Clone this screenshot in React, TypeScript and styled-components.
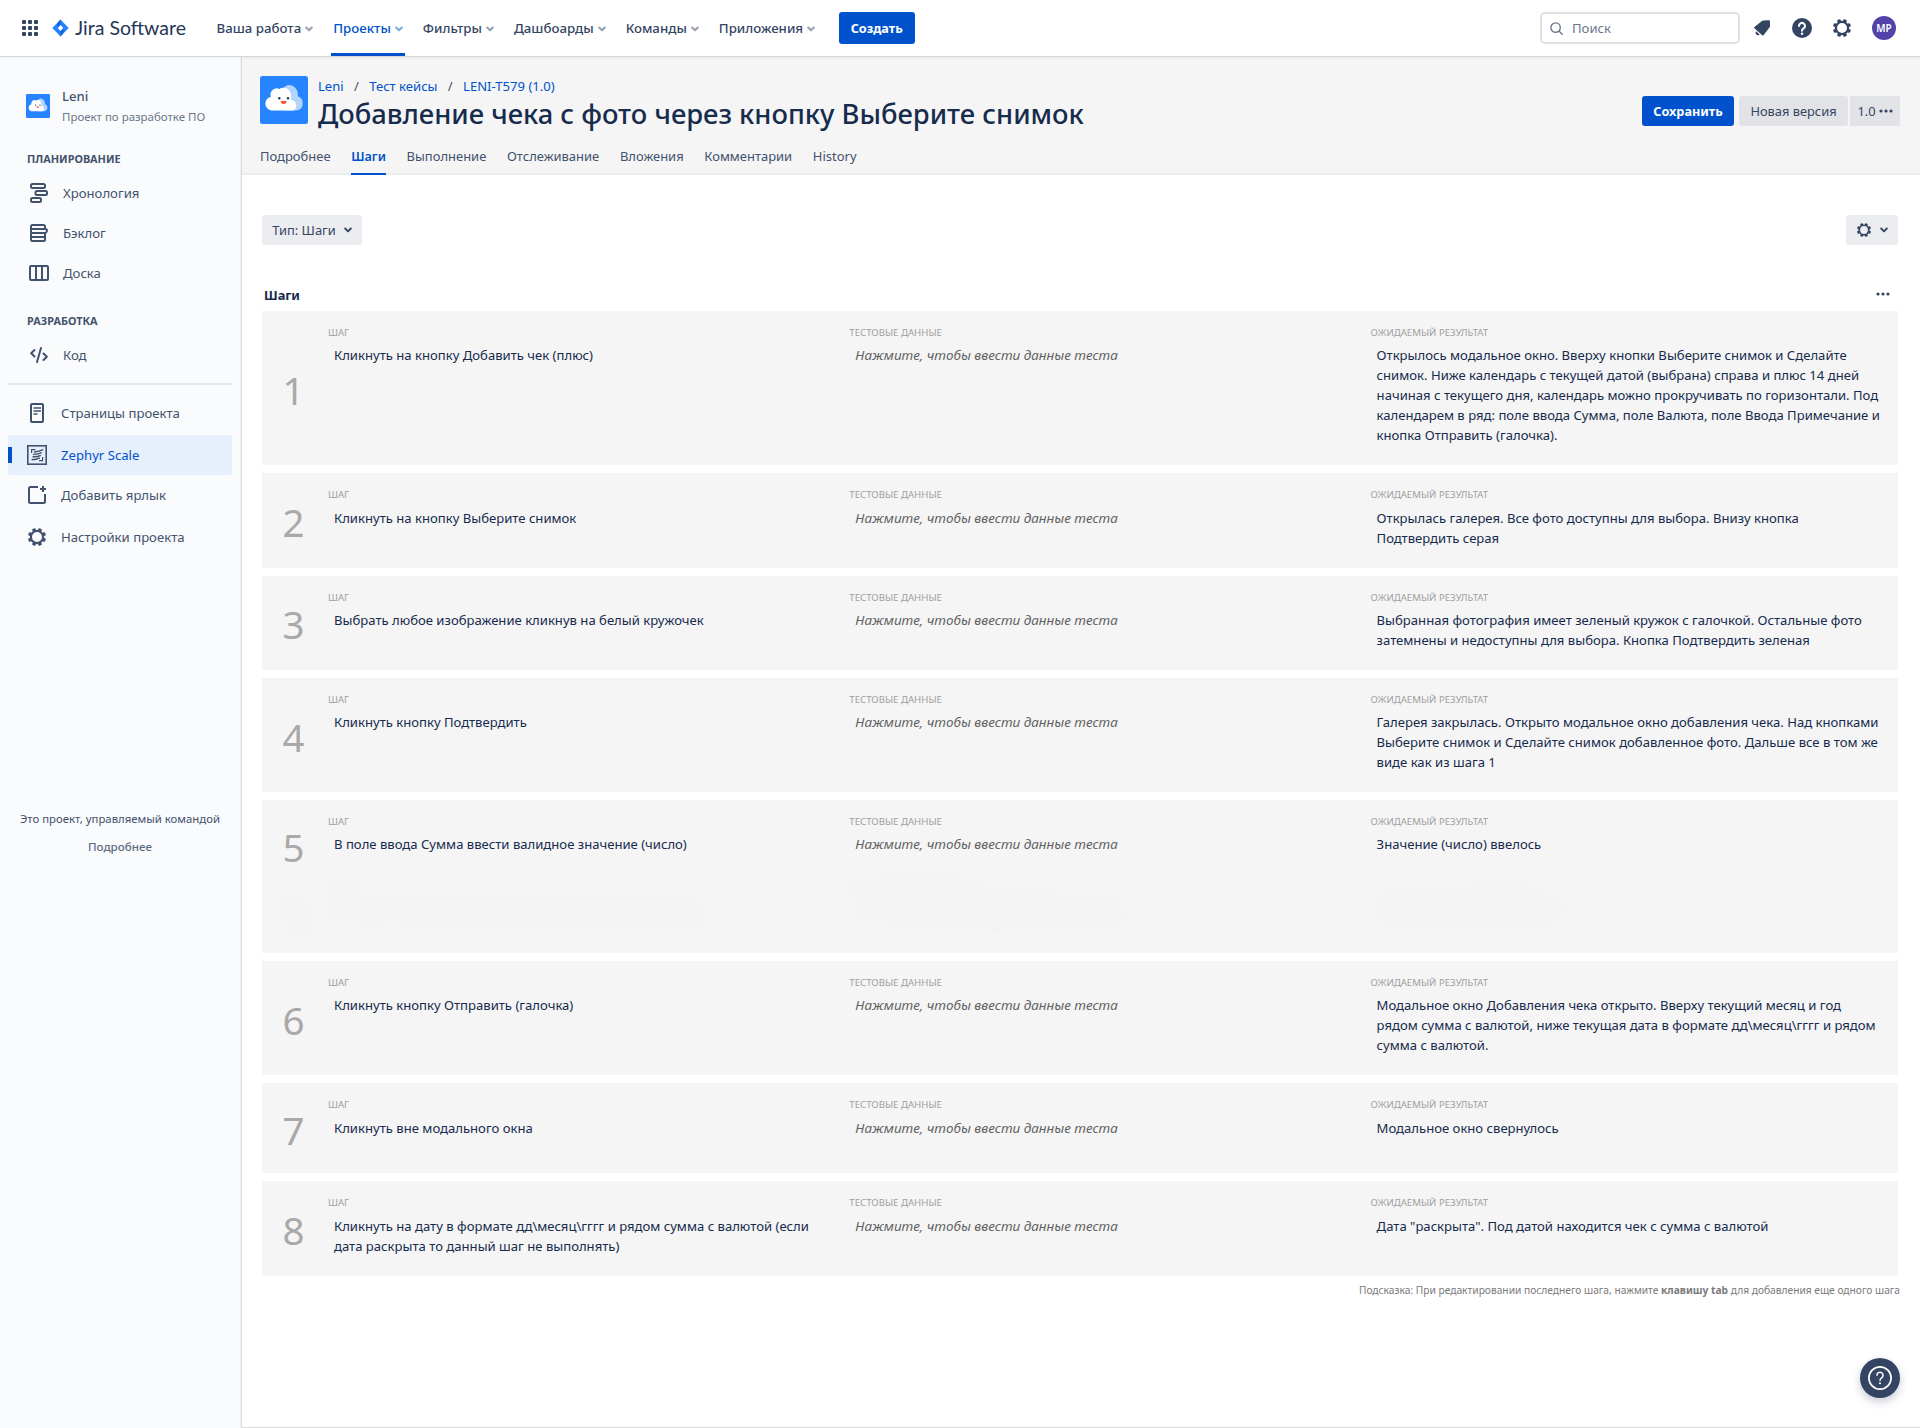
import React from "react";
import styled, { createGlobalStyle, css } from "styled-components";

const Global = createGlobalStyle`
  *, *::before, *::after { box-sizing: border-box; }
  body {
    margin: 0;
    background: #fff;
    color: #172b4d;
    font-family: "Noto Sans", "Open Sans", sans-serif;
    font-size: 13.1px;
    line-height: 20px;
  }
  svg { display: block; flex: none; }
`;

/* ---------- layout ---------- */
const Page = styled.div`
  display: grid;
  grid-template-rows: 56px 1fr;
  height: 1428px;
  overflow: hidden;
`;
const Body = styled.div`
  display: grid;
  grid-template-columns: 242px minmax(0, 1fr);
  min-height: 0;
`;

/* ---------- top bar ---------- */
const TopBar = styled.header`
  z-index: 2;
  display: flex;
  align-items: center;
  padding: 0 24px 0 22px;
  background: #fff;
  color: #344563;
  box-shadow: 0 1px 0 #d4d7de, 0 2px 2px rgba(9, 30, 66, 0.06);
`;
const Brand = styled.div`
  display: flex;
  align-items: center;
  gap: 6px;
  width: 178px;
  margin-left: 14px;
  color: #253858;
  font-family: Lato, sans-serif;
  font-size: 19.5px;
`;
const Nav = styled.nav`
  display: flex;
  gap: 15px;
  height: 56px;
  margin-left: -16px;
`;
const NavItem = styled.a<{ $active?: boolean }>`
  display: flex;
  align-items: center;
  gap: 4px;
  padding: 0 2.5px;
  font-size: 13.27px;
  font-weight: 500;
  border-bottom: 3px solid transparent;
  border-top: 3px solid transparent;
  ${(p) => p.$active && css`
    color: #0052cc;
    border-bottom-color: #0052cc;
  `}
  svg { opacity: 0.5; margin-top: 1px; }
`;
const Button = styled.button<{ $primary?: boolean; $height?: number; $width: number; $square?: boolean; $gap?: number }>`
  display: flex;
  align-items: center;
  justify-content: center;
  gap: ${(p) => p.$gap ?? 4}px;
  width: ${(p) => p.$width}px;
  height: ${(p) => p.$height ?? 30}px;
  padding: 0;
  border: 0;
  border-radius: ${(p) => (p.$square ? 0 : 3)}px;
  background: ${(p) => (p.$primary ? "#0052cc" : "rgba(9, 30, 66, 0.08)")};
  color: ${(p) => (p.$primary ? "#fff" : "#344563")};
  font-family: inherit;
  font-size: ${(p) => (p.$primary ? 12.7 : 12.85)}px;
  font-weight: ${(p) => (p.$primary ? 700 : 400)};
  white-space: nowrap;
`;
const CreateSlot = styled.div`
  margin: 0 auto 0 21px;
`;
const Search = styled.div`
  display: flex;
  align-items: center;
  gap: 9px;
  width: 200px;
  height: 32px;
  padding-left: 8px;
  border: 2px solid #dfe1e6;
  border-radius: 5px;
  color: #6b778c;
`;
const TopIcons = styled.div`
  display: grid;
  grid-template-columns: repeat(3, 40px) 44px;
  place-items: center;
  margin: 0 -10px 0 2px;
`;
const UserBadge = styled.div`
  display: grid;
  place-items: center;
  width: 24px;
  height: 24px;
  border-radius: 50%;
  background: #5243aa;
  color: #fff;
  font-size: 10px;
  font-weight: 600;
`;

/* ---------- sidebar ---------- */
const Sidebar = styled.aside`
  display: flex;
  flex-direction: column;
  padding: 28px 9px 0 8px;
  border-right: 1px solid #dcdde0;
  box-shadow: inset -1px 0 0 #eff0f2;
  background: #fafbfc;
  color: #42526e;
`;
const Project = styled.div`
  display: flex;
  align-items: center;
  gap: 12px;
  height: 44px;
  padding-left: 18px;
`;
const ProjectName = styled.div`
  font-size: 13.1px;
  font-weight: 500;
  line-height: 21px;
`;
const ProjectKind = styled.div`
  color: #6b778c;
  font-size: 11.48px;
  line-height: 20px;
`;
const Group = styled.h3<{ $top: number }>`
  height: 20px;
  margin: ${(p) => p.$top}px 0 4px 19px;
  font-size: 10.87px;
  font-weight: 700;
  line-height: 20px;
`;
const SideItem = styled.a<{ $active?: boolean; $indent?: number; $height?: number }>`
  display: grid;
  grid-template-columns: 22px auto;
  column-gap: 13px;
  align-items: center;
  justify-content: start;
  height: ${(p) => p.$height ?? 40}px;
  padding-left: ${(p) => p.$indent ?? 20}px;
  border-radius: 3px;
  font-size: 13.15px;
  ${(p) => p.$active && css`
    background: linear-gradient(#0052cc, #0052cc) 0 12px / 4px 16px no-repeat #e6effc;
    color: #0052cc;
  `}
  svg { color: #42526e; justify-self: center; }
`;
const Divider = styled.hr`
  width: 100%;
  height: 2px;
  margin: 8px 0;
  border: 0;
  background: #e7e9ec;
`;
const SideNote = styled.div`
  margin-top: 250px;
  text-align: center;
  font-size: 11.35px;
`;
const SideNoteLink = styled.div`
  margin-top: 8px;
  color: #5e6c84;
  font-size: 11.6px;
  font-weight: 500;
`;

/* ---------- main ---------- */
const Main = styled.main`
  display: flex;
  flex-direction: column;
  min-width: 0;
  border-bottom: 1px solid #dcdcdc;
`;
const Head = styled.div`
  display: flex;
  flex-direction: column;
  justify-content: space-between;
  height: 119px;
  padding: 20px 20px 0 18px;
  border-bottom: 2px solid #ebecf0;
  background: #f5f5f5;
`;
const HeadRow = styled.div`
  display: flex;
  height: 54px;
`;
const HeadText = styled.div`
  margin-left: 10px;
`;
const Crumbs = styled.div`
  display: flex;
  gap: 10.3px;
  height: 20px;
  color: #42526e;
  a { color: #0052cc; }
`;
const Title = styled.h1`
  margin: 0;
  font-size: 27.35px;
  font-weight: 500;
  line-height: 36px;
  white-space: nowrap;
`;
const Actions = styled.div`
  display: flex;
  align-items: flex-start;
  gap: 2px;
  margin-left: auto;
  padding-top: 20px;
`;
const SaveSlot = styled.div`
  margin-right: 3px;
`;
const Tabs = styled.div`
  display: flex;
  gap: 20.7px;
  margin-bottom: -2px;
  color: #42526e;
`;
const Tab = styled.a<{ $active?: boolean }>`
  height: 29px;
  font-size: 12.98px;
  line-height: 20px;
  ${(p) => p.$active && css`
    color: #0052cc;
    font-weight: 600;
    font-size: 12.6px;
    line-height: 21px;
    border-bottom: 2px solid #0052cc;
  `}
`;
const Content = styled.div`
  padding: 40px 20px 0;
`;
const Toolbar = styled.div`
  display: flex;
  justify-content: space-between;
  padding-right: 2px;
`;
const StepsHead = styled.div`
  display: flex;
  align-items: center;
  justify-content: space-between;
  height: 20px;
  margin: 40px 10px 6px 2px;
  font-size: 12.8px;
  font-weight: 700;
  svg { margin-bottom: 2px; }
`;
const StepList = styled.ol`
  display: grid;
  gap: 8px;
  margin: 0 2px 0 0;
  padding: 0;
  list-style: none;
`;
const Step = styled.li<{ $minHeight?: number }>`
  position: relative;
  display: grid;
  grid-template-columns: 66px repeat(3, 521.3px);
  grid-template-rows: minmax(90px, auto);
  align-content: start;
  min-height: ${(p) => p.$minHeight ?? 90}px;
  overflow: hidden;
  background: #f5f5f5;
`;
const StepNumber = styled.div`
  align-self: center;
  width: 63px;
  padding-top: 3.5px;
  color: #a9a9a9;
  font-size: 38.5px;
  line-height: 50px;
  text-align: center;
`;
const Field = styled.div`
  padding: 14.95px 0 12px;
`;
const FieldLabel = styled.div`
  height: 14px;
  color: #a0a0a0;
  font-size: 9.65px;
  line-height: 14px;
  text-transform: uppercase;
`;
const FieldText = styled.div<{ $hint?: boolean }>`
  padding: 5.3px 0 8.05px 6px;
  white-space: pre;
  ${(p) => p.$hint && css`
    color: #626262;
    font-size: 13.48px;
    font-style: italic;
  `}
`;
const Smudges = styled.svg`
  position: absolute;
  left: 0;
  top: 70px;
  filter: blur(2px);
`;
const Tip = styled.p`
  margin: 5px 0 0;
  color: #7a7a7a;
  font-size: 10.22px;
  line-height: 18px;
  text-align: right;
`;
const HelpButton = styled.button`
  position: fixed;
  right: 20px;
  bottom: 30px;
  display: grid;
  place-items: center;
  width: 40px;
  height: 40px;
  padding: 0;
  border: 0;
  border-radius: 50%;
  background: #344563;
  box-shadow: 0 4px 8px rgba(9, 30, 66, 0.22);
`;

/* ---------- icons ---------- */
const Chevron = ({ size = 8, stroke = 2.1 }: { size?: number; stroke?: number }) => (
  <svg width={size} height={size * 0.75} viewBox="0 0 8 6" fill="none" stroke="currentColor" strokeWidth={stroke} strokeLinecap="round" strokeLinejoin="round">
    <path d="M1.2 1.5 4 4.3 6.8 1.5" />
  </svg>
);
const Dots = () => (
  <svg width="14" height="4" viewBox="0 0 14 4" fill="#344563">
    <circle cx="2" cy="2" r="1.6" /><circle cx="7" cy="2" r="1.6" /><circle cx="12" cy="2" r="1.6" />
  </svg>
);
const AppGrid = () => (
  <svg width="16" height="16" fill="#344563">
    {[0, 6, 12].map((y) => [0, 6, 12].map((x) => <rect key={`${x}-${y}`} x={x} y={y} width="4" height="4" rx="1" />))}
  </svg>
);
const JiraMark = () => (
  <svg width="17" height="18" viewBox="0 0 17 18">
    <path d="M8.5.4 16.7 9 8.5 17.6.3 9Z" fill="#2684ff" />
    <path d="M8.5.4V6L6 8.2Q4 5 8.5.4Z" fill="#1260d8" />
    <path d="M8.5 17.6V12L11 9.8Q13 13 8.5 17.6Z" fill="#1260d8" />
    <path d="M8.5 6 11.2 9 8.5 12 5.8 9Z" fill="#fff" />
  </svg>
);
const gearTeeth = [22.5, 67.5, 112.5, 157.5, 202.5, 247.5, 292.5, 337.5];
const Gear = ({ size = 18 }: { size?: number }) => (
  <svg width={size} height={size} viewBox="-9 -9 18 18">
    <circle r="6.1" fill="none" stroke="currentColor" strokeWidth="2.2" />
    {gearTeeth.map((a) => (
      <rect key={a} x="-1.8" y="-9.1" width="3.6" height="3.2" rx="1" fill="currentColor" transform={`rotate(${a})`} />
    ))}
  </svg>
);
const SearchIcon = () => (
  <svg width="13" height="13" viewBox="0 0 13 13" fill="none" stroke="currentColor" strokeWidth="1.4" strokeLinecap="round">
    <circle cx="5.6" cy="5.6" r="4.7" /><path d="m9.2 9.2 3 3" />
  </svg>
);
const Bell = () => (
  <svg width="18" height="18" viewBox="0 0 18 18" fill="#344563">
    <path d="M15.500 1.200Q17 1.100 17 2.500v4.700q0 .9-.7 1.500L10.700 16q-.8 1-1.500.2L1.400 9.300q-.9-.8.1-1.400L8.600 2.300Q9.400 1.600 10.500 1.500Z" />
    <path d="M3.200 12.300 6.600 15.500A2.300 2.300 0 0 1 3.200 12.300Z" />
  </svg>
);
const HelpSolid = () => (
  <svg width="20" height="20" viewBox="0 0 20 20">
    <circle cx="10" cy="10" r="10" fill="#344563" />
    <path d="M7 7.900a3 3 0 1 1 4.500 2.600Q10 11.300 10 12.800" fill="none" stroke="#fff" strokeWidth="2" strokeLinecap="round" />
    <circle cx="10" cy="15.700" r="1.200" fill="#fff" />
  </svg>
);
const HelpOutline = () => (
  <svg width="24" height="24" viewBox="0 0 24 24" fill="none" stroke="#fff">
    <circle cx="12" cy="12" r="11.100" strokeWidth="1.700" />
    <path d="M9 9.300a3 3 0 1 1 4.600 2.500Q12 12.900 12 14.600" strokeWidth="1.500" strokeLinecap="round" />
    <circle cx="12" cy="17.300" r="1" fill="#fff" stroke="none" />
  </svg>
);
const Cloud = ({ size }: { size: number }) => (
  <svg width={size} height={size} viewBox="0 0 48 48">
    <rect width="48" height="48" rx="2.500" fill="#2684ff" />
    <path d="M24 34.500h12a7.300 7.300 0 0 0 1.800-14.200A8.500 10 0 0 0 23 12.500Z" fill="#b3d4ff" />
    <path d="M11.500 34.500a7 7 0 0 1-.6-13.800A6.200 6.200 0 0 1 19.500 13a7.500 7.500 0 0 1 11.300 4.500q.6 3.500.4 6.500a5.500 5.500 0 0 1 1.800 10.500Z" fill="#fff" />
    <circle cx="19.300" cy="22.300" r="1.200" fill="#253858" /><circle cx="28" cy="22.300" r="1.200" fill="#253858" />
    <path d="M20.700 25h5.800a2.900 2.900 0 0 1-5.800 0Z" fill="#ff5630" />
  </svg>
);
const strokeProps = { fill: "none", stroke: "currentColor", strokeWidth: 2, strokeLinejoin: "round" as const, strokeLinecap: "round" as const };
const Timeline = () => (
  <svg width="18" height="20" viewBox="0 0 18 20" {...strokeProps}>
    <rect x="1" y="1" width="14" height="4" rx="1.500" />
    <rect x="5.500" y="8" width="11.500" height="4" rx="1.500" />
    <rect x="1" y="15" width="10" height="4" rx="1.500" />
  </svg>
);
const Backlog = () => (
  <svg width="18" height="18" viewBox="0 0 18 18" {...strokeProps}>
    <path d="M1 5V2.500Q1 1 2.500 1h11Q15 1 15 2.500V5M1 5h14.500Q17 5 17 6.500T15.500 9M1 5v2.500Q1 9 2.500 9H15M15 9v6.500q0 1.500-1.500 1.500h-11Q1 17 1 15.500V10M1.500 13H15" />
  </svg>
);
const Board = () => (
  <svg width="20" height="16" viewBox="0 0 20 16" {...strokeProps}>
    <rect x="1" y="1" width="18" height="14" rx="1" /><path d="M7 1v14M13 1v14" />
  </svg>
);
const Code = () => (
  <svg width="18" height="16" viewBox="0 0 18 16" {...strokeProps}>
    <path d="M4.500 3 1.200 6.200 4.500 9.500M13.500 6.500 16.800 9.800 13.500 13M11 1 7 15" />
  </svg>
);
const PageIcon = () => (
  <svg width="14" height="20" viewBox="0 0 14 20" {...strokeProps}>
    <rect x="1" y="1" width="12" height="18" rx="1" /><path strokeLinecap="butt" strokeWidth="1.700" d="M3.500 5h7.500M3.500 8h7.500M3.500 11h4" />
  </svg>
);
const Zephyr = () => (
  <svg width="20" height="20" viewBox="0 0 20 20" fill="none" stroke="currentColor">
    <rect x=".8" y=".8" width="18.400" height="18.400" strokeWidth="1.600" />
    <path strokeWidth="1.200" d="M4.600 8V4.600H8.500M15.600 12v3.600H12" />
    <path strokeWidth="1.400" d="M16.200 4.600Q12.500 6.500 7 7M14.800 7.600Q11.500 9.300 6 9.400M13.800 10.300Q10.500 12 5.500 11.800M12.800 12.800Q9.500 14.500 4.600 14.800" />
  </svg>
);
const AddShortcut = () => (
  <svg width="18" height="18" viewBox="0 0 18 18" {...strokeProps} strokeLinecap="butt">
    <path d="M10 1H2.500Q1 1 1 2.500v13Q1 17 2.500 17h13q1.500 0 1.500-1.500V8" /><path d="M15 0v6M12 3h6" />
  </svg>
);

/* ---------- data ---------- */
const navItems = ["Ваша работа", "Проекты", "Фильтры", "Дашбоарды", "Команды", "Приложения"];
const tabs = ["Подробнее", "Шаги", "Выполнение", "Отслеживание", "Вложения", "Комментарии", "History"];
const steps = [
  { action: "Кликнуть на кнопку Добавить чек (плюс)", result: "Открылось модальное окно. Вверху кнопки Выберите снимок и Сделайте\nснимок. Ниже календарь с текущей датой (выбрана) справа и плюс 14 дней\nначиная с текущего дня, календарь можно прокручивать по горизонтали. Под\nкалендарем в ряд: поле ввода Сумма, поле Валюта, поле Ввода Примечание и\nкнопка Отправить (галочка)." },
  { action: "Кликнуть на кнопку Выберите снимок", result: "Открылась галерея. Все фото доступны для выбора. Внизу кнопка\nПодтвердить серая" },
  { action: "Выбрать любое изображение кликнув на белый кружочек", result: "Выбранная фотография имеет зеленый кружок с галочкой. Остальные фото\nзатемнены и недоступны для выбора. Кнопка Подтвердить зеленая" },
  { action: "Кликнуть кнопку Подтвердить", result: "Галерея закрылась. Открыто модальное окно добавления чека. Над кнопками\nВыберите снимок и Сделайте снимок добавленное фото. Дальше все в том же\nвиде как из шага 1" },
  { action: "В поле ввода Сумма ввести валидное значение (число)", result: "Значение (число) ввелось", minHeight: 153 },
  { action: "Кликнуть кнопку Отправить (галочка)", result: "Модальное окно Добавления чека открыто. Вверху текущий месяц и год\nрядом сумма с валютой, ниже текущая дата в формате дд\\месяц\\гггг и рядом\nсумма с валютой." },
  { action: "Кликнуть вне модального окна", result: "Модальное окно свернулось" },
  { action: "Кликнуть на дату в формате дд\\месяц\\гггг и рядом сумма с валютой (если\nдата раскрыта то данный шаг не выполнять)", result: "Дата \"раскрыта\". Под датой находится чек с сумма с валютой" },
];

export default function App() {
  return (
    <Page>
      <Global />
      <TopBar>
        <AppGrid />
        <Brand><JiraMark />Jira Software</Brand>
        <Nav>
          {navItems.map((n) => (
            <NavItem key={n} $active={n === "Проекты"}>{n}<Chevron /></NavItem>
          ))}
        </Nav>
        <CreateSlot><Button $primary $width={76} $height={32}>Создать</Button></CreateSlot>
        <Search><SearchIcon />Поиск</Search>
        <TopIcons>
          <Bell /><HelpSolid /><Gear /><UserBadge>MP</UserBadge>
        </TopIcons>
      </TopBar>
      <Body>
        <Sidebar>
          <Project>
            <Cloud size={24} />
            <div>
              <ProjectName>Leni</ProjectName>
              <ProjectKind>Проект по разработке ПО</ProjectKind>
            </div>
          </Project>
          <Group $top={21}>ПЛАНИРОВАНИЕ</Group>
          <SideItem><Timeline />Хронология</SideItem>
          <SideItem><Backlog />Бэклог</SideItem>
          <SideItem><Board />Доска</SideItem>
          <Group $top={18}>РАЗРАБОТКА</Group>
          <SideItem><Code />Код</SideItem>
          <Divider />
          <SideItem $indent={18}><PageIcon />Страницы проекта</SideItem>
          <SideItem as="div" $indent={18} $height={2} />
          <SideItem $indent={18} $active><Zephyr />Zephyr Scale</SideItem>
          <SideItem $indent={18}><AddShortcut />Добавить ярлык</SideItem>
          <SideItem $indent={18} $height={44}><Gear />Настройки проекта</SideItem>
          <SideNote>
            Это проект, управляемый командой
            <SideNoteLink>Подробнее</SideNoteLink>
          </SideNote>
        </Sidebar>
        <Main>
          <Head>
            <HeadRow>
              <Cloud size={48} />
              <HeadText>
                <Crumbs><a>Leni</a><span>/</span><a>Тест кейсы</a><span>/</span><a>LENI-T579 (1.0)</a></Crumbs>
                <Title>Добавление чека с фото через кнопку Выберите снимок</Title>
              </HeadText>
              <Actions>
                <SaveSlot><Button $primary $width={92}>Сохранить</Button></SaveSlot>
                <Button $width={109}>Новая версия</Button>
                <Button $width={50} $square $gap={3}>1.0 <Dots /></Button>
              </Actions>
            </HeadRow>
            <Tabs>
              {tabs.map((t) => <Tab key={t} $active={t === "Шаги"}>{t}</Tab>)}
            </Tabs>
          </Head>
          <Content>
            <Toolbar>
              <Button $width={100} $gap={8}>Тип: Шаги <Chevron stroke={1.9} /></Button>
              <Button $width={52} $gap={9}><Gear size={14} /><Chevron stroke={1.9} /></Button>
            </Toolbar>
            <StepsHead>Шаги<Dots /></StepsHead>
            <StepList>
              {steps.map((s, i) => (
                <Step key={i} $minHeight={s.minHeight}>
                  <StepNumber>{i + 1}</StepNumber>
                  <Field><FieldLabel>Шаг</FieldLabel><FieldText>{s.action}</FieldText></Field>
                  <Field><FieldLabel>Тестовые данные</FieldLabel><FieldText $hint>Нажмите, чтобы ввести данные теста</FieldText></Field>
                  <Field><FieldLabel>Ожидаемый результат</FieldLabel><FieldText>{s.result}</FieldText></Field>
                  {s.minHeight && (
                    <Smudges width="1636" height="80" fill="#f3f3f3">
                      <path d="M20 30 40 22 52 50 46 66 26 62ZM64 24 160 28 436 27 438 56 66 52ZM64 8 100 12 100 18 66 20ZM586 12 640 4 700 8 740 22 860 26 862 56 700 60 600 50ZM1116 24 1260 10 1310 40 1280 56 1120 54Z" />
                    </Smudges>
                  )}
                </Step>
              ))}
            </StepList>
            <Tip>Подсказка: При редактировании последнего шага, нажмите <b>клавишу tab</b> для добавления еще одного шага</Tip>
          </Content>
        </Main>
      </Body>
      <HelpButton><HelpOutline /></HelpButton>
    </Page>
  );
}
